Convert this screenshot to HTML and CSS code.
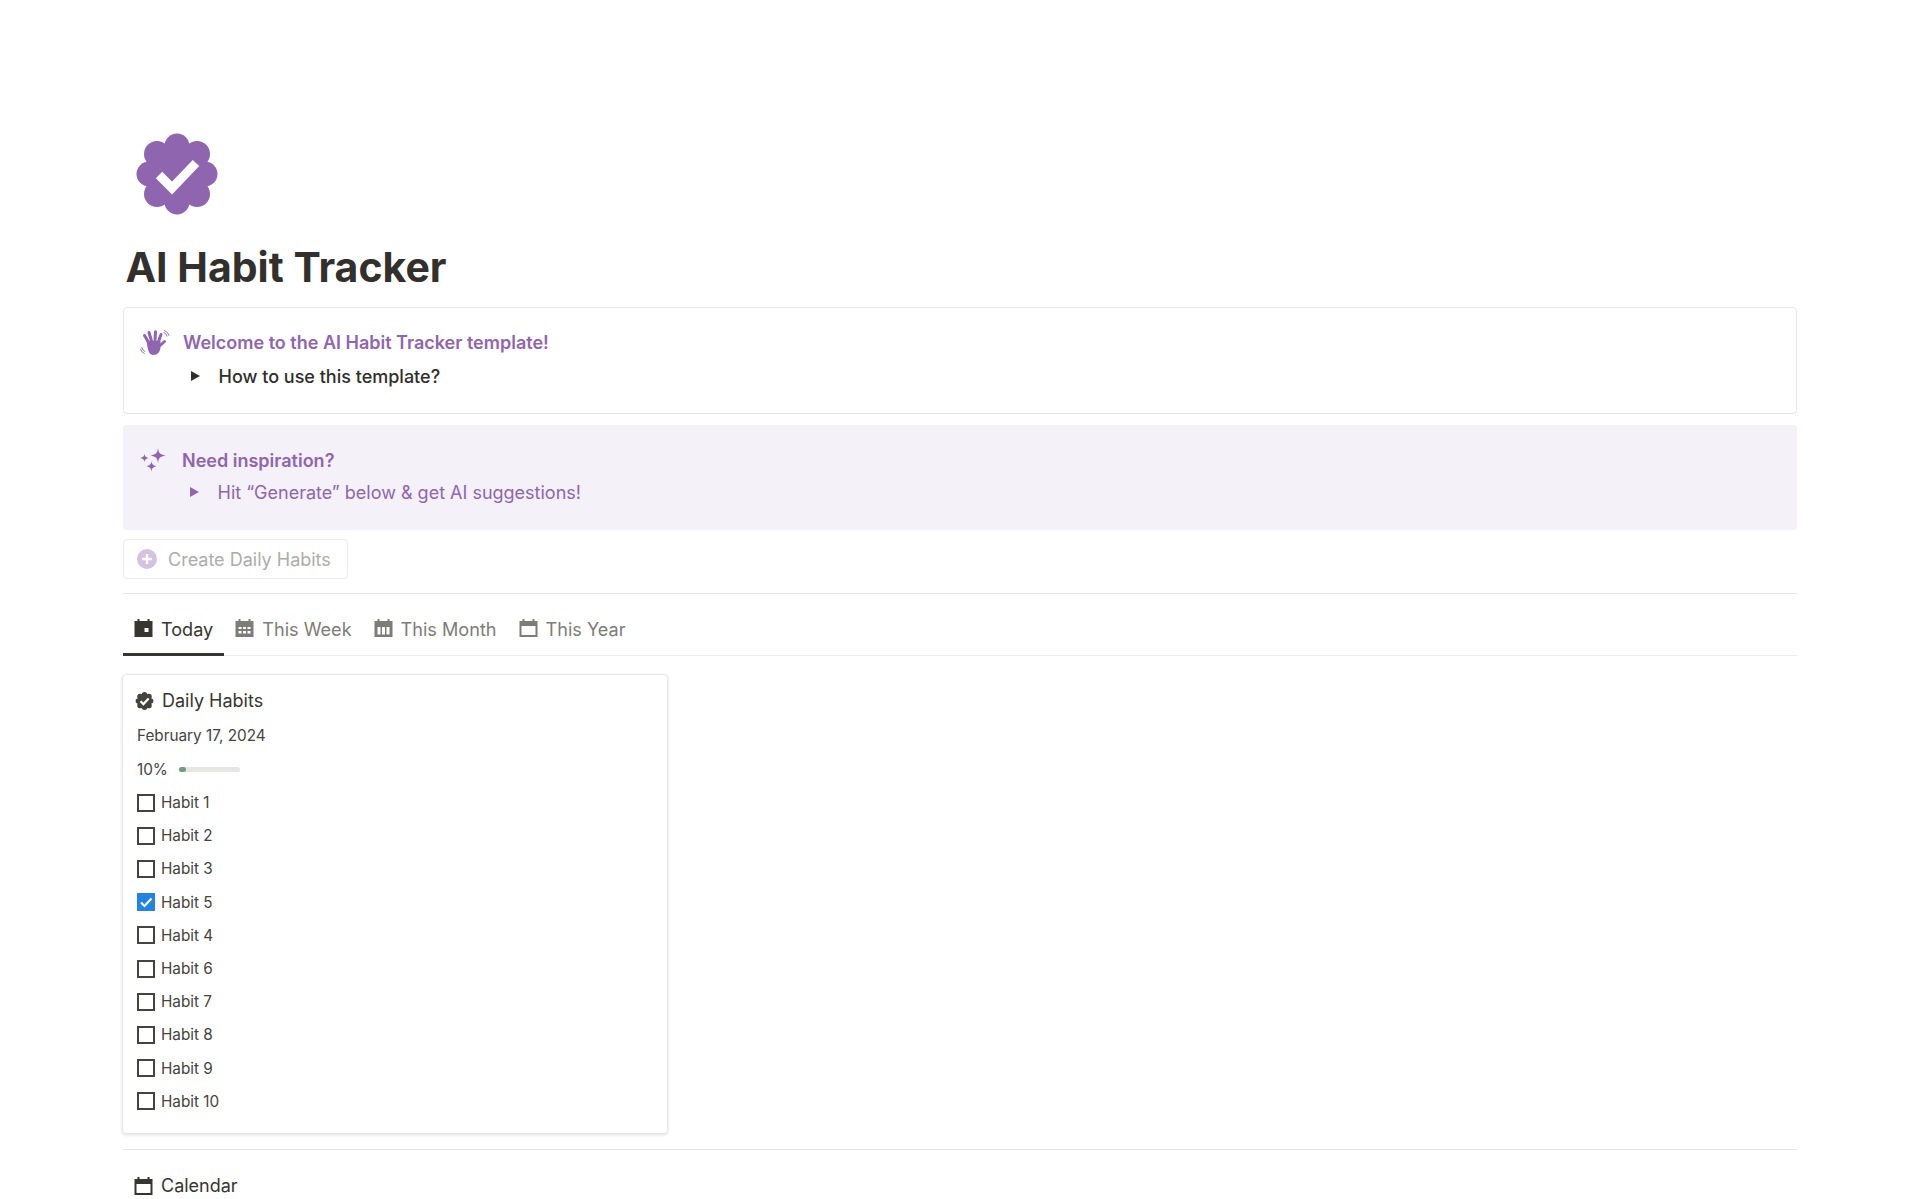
FILE: index.html
```html
<!DOCTYPE html>
<html lang="en">
<head>
<meta charset="utf-8">
<title>AI Habit Tracker</title>
<link rel="stylesheet" href="styles.css">
</head>
<body>
<main class="page">
  <svg class="page-icon" viewBox="0 0 82 82" aria-hidden="true">
    <g fill="#9065b0">
      <circle cx="41" cy="13" r="12.500"/><circle cx="41" cy="69" r="12.500"/>
      <circle cx="13" cy="41" r="12.500"/><circle cx="69" cy="41" r="12.500"/>
      <circle cx="21" cy="21" r="13"/><circle cx="61" cy="21" r="13"/>
      <circle cx="21" cy="61" r="13"/><circle cx="61" cy="61" r="13"/>
      <circle cx="41" cy="41" r="30"/>
    </g>
    <path d="M23 42 36 55 60 30" fill="none" stroke="#fff" stroke-width="9"/>
  </svg>
  <h1 class="title">AI Habit Tracker</h1>

  <section class="callout callout-outline">
    <svg class="callout-icon" viewBox="0 0 30 26" aria-hidden="true">
      <g stroke="#9065b0" stroke-linecap="round" fill="none">
        <g stroke-width="3">
          <path d="M8.500 12 4.500 5.500"/><path d="M11.500 11 9 2.500"/><path d="M15 10.500 15.500 1.800"/><path d="M18.500 11.500 21 4.500"/><path d="M19.500 16 24.500 11.500"/>
        </g>
        <g stroke-width=".9"><path d="M24 2.500a5 5 0 0 1 3 3.500"/><path d="M24.500.5a7 7 0 0 1 4.500 5"/><path d="M1.800 17.500a5 5 0 0 0 3 4"/><path d="M.5 19a6 6 0 0 0 3.800 4.500"/></g>
      </g>
      <path d="M6.500 11h14v6c0 5-3.500 8-7 8-4.500 0-5.500-3.500-7-14z" fill="#9065b0"/>
    </svg>
    <div class="callout-body">
      <p class="callout-title">Welcome to the AI Habit Tracker template!</p>
      <div class="toggle toggle-dark"><span class="toggle-arrow"></span><span>How to use this template?</span></div>
    </div>
  </section>

  <section class="callout callout-tint">
    <svg class="callout-icon spark" viewBox="0 0 27 24" aria-hidden="true">
      <g fill="#9065b0">
        <path d="M18 0c.6 5 1.900 6.500 7.500 7.500-5.600 1-6.900 2.500-7.500 7.500-.6-5-1.900-6.500-7.500-7.500 5.600-1 6.900-2.500 7.500-7.500z"/>
        <path d="M4.500 5.500c.3 2.800 1.100 3.700 4.300 4.500-3.200.8-4 1.700-4.300 4.500-.3-2.800-1.100-3.700-4.300-4.500 3.200-.8 4-1.700 4.300-4.500z"/>
        <path d="M11.500 13c.4 3.300 1.400 4.300 5 5.200-3.600.9-4.600 1.900-5 5.300-.4-3.400-1.400-4.400-5-5.300 3.600-.9 4.600-1.900 5-5.200z"/>
      </g>
    </svg>
    <div class="callout-body">
      <p class="callout-title">Need inspiration?</p>
      <div class="toggle toggle-purple"><span class="toggle-arrow"></span><span>Hit “Generate” below &amp; get AI suggestions!</span></div>
    </div>
  </section>

  <div class="create-btn">
    <svg class="plus" viewBox="0 0 20 20" aria-hidden="true"><circle cx="10" cy="10" r="10" fill="#d4c2e1"/><path d="M10 5v10M5 10h10" stroke="#fff" stroke-width="2.400"/></svg>
    <span>Create Daily Habits</span>
  </div>

  <hr class="rule rule-top">

  <nav class="tabs">
    <div class="tab tab-active">
      <svg class="cal" viewBox="0 0 18 18" aria-hidden="true"><path fill-rule="evenodd" d="M3 0h2v2h8V0h2v2h3v16H0V2h3zM10 9v4h4V9z"/></svg>
      <span>Today</span>
    </div>
    <div class="tab">
      <svg class="cal" viewBox="0 0 18 18" aria-hidden="true"><path fill-rule="evenodd" d="M3 0h2v2h8V0h2v2h3v16H0V2h3zM3 8v2h3V8zM7.500 8v2h3V8zM12 8v2h3V8zM3 12v2.500h3V12zM7.500 12v2.500h3V12zM12 12v2.500h3V12z"/></svg>
      <span>This Week</span>
    </div>
    <div class="tab">
      <svg class="cal" viewBox="0 0 18 18" aria-hidden="true"><path fill-rule="evenodd" d="M3 0h2v2h8V0h2v2h3v16H0V2h3zM3 8v7.500h3V8zM7.500 8v7.500h3V8zM12 8v7.500h3V8z"/></svg>
      <span>This Month</span>
    </div>
    <div class="tab">
      <svg class="cal" viewBox="0 0 18 18" aria-hidden="true"><path fill-rule="evenodd" d="M3 0h2v2h8V0h2v2h3v16H0V2h3zM2 7v9h14V7z"/></svg>
      <span>This Year</span>
    </div>
  </nav>

  <article class="card">
    <div class="card-head">
      <svg class="cal badge" viewBox="0 0 82 82" aria-hidden="true">
        <g>
          <circle cx="41" cy="13" r="12.500"/><circle cx="41" cy="69" r="12.500"/>
          <circle cx="13" cy="41" r="12.500"/><circle cx="69" cy="41" r="12.500"/>
          <circle cx="21" cy="21" r="13"/><circle cx="61" cy="21" r="13"/>
          <circle cx="21" cy="61" r="13"/><circle cx="61" cy="61" r="13"/>
          <circle cx="41" cy="41" r="30"/>
        </g>
        <path d="M23 42 36 55 60 30" fill="none" stroke="#fff" stroke-width="10"/>
      </svg>
      <span>Daily Habits</span>
    </div>
    <div class="card-row">February 17, 2024</div>
    <div class="card-row progress-row">
      <span>10%</span>
      <span class="bar"><span class="bar-fill"></span></span>
    </div>
    <ul class="habits">
      <li class="habit"><span class="box"></span>Habit 1</li>
      <li class="habit"><span class="box"></span>Habit 2</li>
      <li class="habit"><span class="box"></span>Habit 3</li>
      <li class="habit"><span class="box box-on"><svg viewBox="0 0 18 18" aria-hidden="true"><path d="M4 9.500l3.500 3.500L14.500 5.500" fill="none" stroke="#fff" stroke-width="2.200"/></svg></span>Habit 5</li>
      <li class="habit"><span class="box"></span>Habit 4</li>
      <li class="habit"><span class="box"></span>Habit 6</li>
      <li class="habit"><span class="box"></span>Habit 7</li>
      <li class="habit"><span class="box"></span>Habit 8</li>
      <li class="habit"><span class="box"></span>Habit 9</li>
      <li class="habit"><span class="box"></span>Habit 10</li>
    </ul>
  </article>

  <hr class="rule rule-bottom">

  <div class="section-head">
    <svg class="cal" viewBox="0 0 18 18" aria-hidden="true"><path fill-rule="evenodd" d="M3 0h2v2h8V0h2v2h3v16H0V2h3zM2 7v9h14V7z"/></svg>
    <span>Calendar</span>
  </div>
</main>
</body>
</html>
```
FILE: styles.css
```css
* { box-sizing: border-box; }
html, body { margin: 0; height: 100%; background: #fff; }
body {
  overflow: hidden;
  font-family: Inter, "Liberation Sans", sans-serif;
  color: #37352f;
}
.page { padding: 133px 123px 0 122px; }
.page-icon { display: block; width: 82px; height: 82px; margin-left: 14px; }
.title {
  margin: 28px 0 0 3.5px;
  font-size: 41px;
  line-height: 48px;
  font-weight: 700;
  color: #32302c;
}
.callout {
  display: flex;
  border-radius: 4px;
  margin-left: 1px;
}
.callout-outline { height: 107px; margin-top: 16px; border: 1.5px solid #e6e6e4; padding: 21px 0 0 16px; }
.callout-tint { height: 105px; margin-top: 11px; background: #f4f1f8; padding: 22px 0 0 17px; }
.callout-icon { width: 30px; height: 26px; flex: none; margin-right: 13px; margin-top: 1px; }
.spark { width: 27px; height: 24px; margin-right: 15px; margin-top: 1px; }
.callout-body { min-width: 0; }
.callout-title { margin: 0; font-size: 18px; line-height: 28px; font-weight: 600; color: #9065b0; }
.toggle { display: flex; align-items: center; height: 28px; margin-top: 5px; font-size: 18px; padding-left: 8px; }
.toggle-arrow {
  width: 0; height: 0;
  margin-right: 18.500px;
  border-left: 9px solid currentColor;
  border-top: 5.5px solid transparent;
  border-bottom: 5.5px solid transparent;
}
.toggle-dark { font-weight: 500; color: #2f2e2a; }
.toggle-purple { margin-top: 3px; color: #9065b0; }
.create-btn {
  display: inline-flex;
  align-items: center;
  gap: 11px;
  height: 40px;
  width: 225px;
  margin: 9px 0 0 1px;
  padding-left: 13px;
  border: 1px solid #ececeb;
  border-radius: 4px;
  font-size: 18px;
  color: #aeaca9;
  vertical-align: top;
}
.plus { width: 20px; height: 20px; flex: none; }
.rule { margin: 0; border: 0; border-top: 1.5px solid #e6e6e4; }
.rule-top { margin: 14px 0 0 1px; }
.tabs {
  display: flex;
  height: 61.500px;
  margin-left: 1px;
  border-bottom: 1px solid #ececeb;
}
.tab {
  display: flex;
  align-items: center;
  gap: 8px;
  height: 61.500px;
  padding: 8px 11px 0;
  font-size: 18.100px;
  color: #7d7c78;
}
.tab-active { color: #37352f; border-bottom: 3px solid #37352f; padding-top: 11px; }
.cal { width: 19px; height: 18px; flex: none; fill: currentColor; }
.tabs .cal { margin-top: -1px; }
.card {
  width: 546px;
  height: 459.500px;
  margin-top: 18.500px;
  padding: 10.500px 12px 0 14px;
  border: 1px solid #e6e6e4;
  border-radius: 4px;
  box-shadow: 0 1px 3px rgba(15, 15, 15, .14);
}
.card-head { display: flex; align-items: center; gap: 8px; height: 30px; margin-left: -2px; font-size: 18px; }
.badge { color: #45433e; }
.card-row { display: flex; align-items: center; height: 33px; margin-top: 3.500px; font-size: 15.300px; color: #45433e; }
.progress-row { margin-top: 1px; }
.bar { display: block; width: 61px; height: 5px; margin-left: 11px; background: #e6e6e3; border-radius: 3px; }
.bar-fill { display: block; width: 7px; height: 5px; background: #6f9c82; border-radius: 3px; }
.habits { margin: 0; padding: 0; list-style: none; }
.habit { display: flex; align-items: center; gap: 6px; height: 33.200px; font-size: 15.300px; color: #45433e; }
.box { display: block; width: 18px; height: 18px; flex: none; border: 2px solid #45433e; }
.box-on { border: 0; background: #2383e2; }
.box-on svg { display: block; width: 18px; height: 18px; }
.rule-bottom { margin: 15px 0 0 1px; }
.section-head {
  display: flex;
  align-items: center;
  gap: 8px;
  height: 30px;
  margin: 21px 0 0 12px;
  font-size: 18px;
}
```
